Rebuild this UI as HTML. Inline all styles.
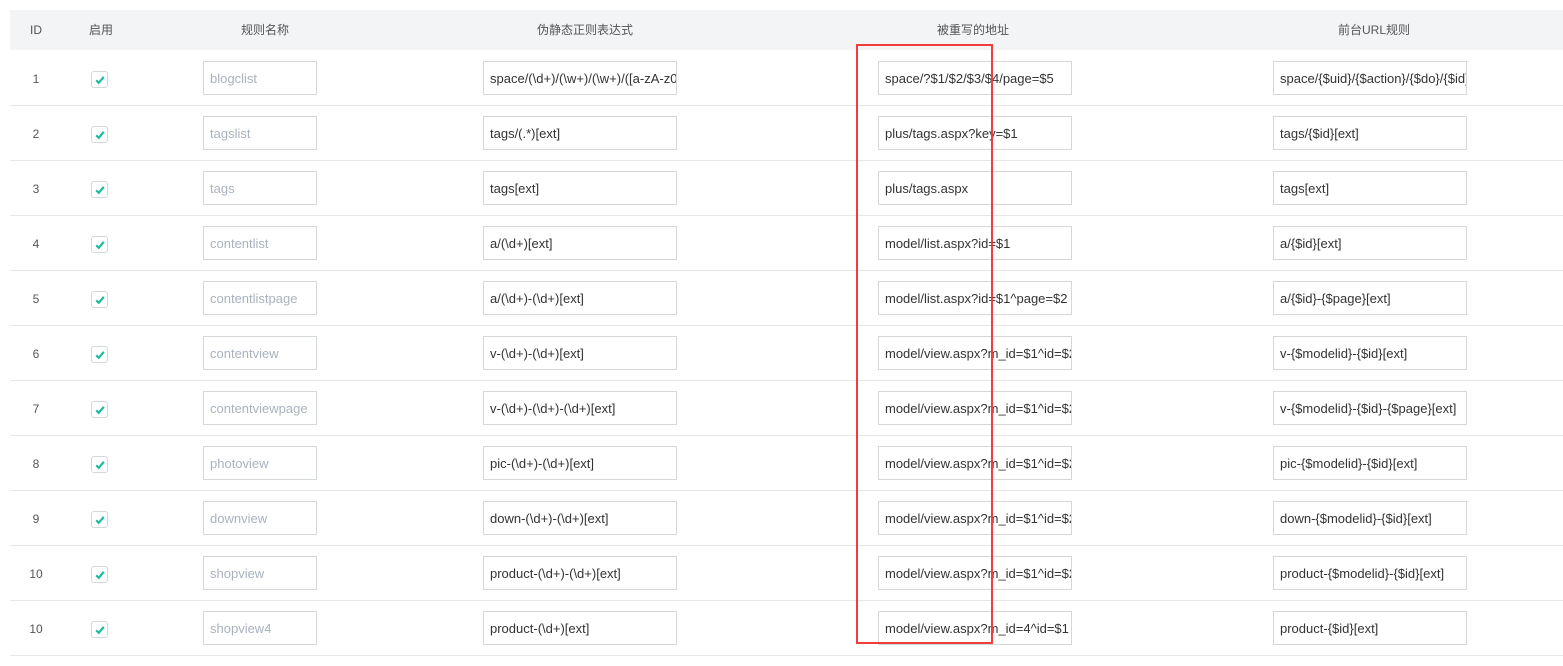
<!DOCTYPE html>
<html><head><meta charset="utf-8"><style>
*{margin:0;padding:0;box-sizing:border-box}
body{width:1563px;height:666px;background:#fff;position:relative;overflow:hidden;font-family:"Liberation Sans","Noto Sans CJK SC",sans-serif;font-size:13px;color:#333}
.hd{position:absolute;left:10px;top:10px;width:1553px;height:40px;background:#f3f4f6}
.h{position:absolute;top:23px;font-size:12px;line-height:14px;color:#555;transform:translateX(-50%);white-space:nowrap}
.row{position:absolute;left:10px;width:1553px;height:55px;border-bottom:1px solid #e6e6e6}
.id{position:absolute;left:26px;top:1px;width:0;line-height:54px;text-align:center;color:#555;font-size:12px}
.id span{position:absolute;transform:translateX(-50%)}
.cb{position:absolute;left:81px;top:20px;width:17px;height:17px;border:1px solid #d3d8db;border-radius:3px;background:#fff}
.cb svg{position:absolute;left:3px;top:3px}
.in{position:absolute;top:10px;height:34px;border:1px solid #d4d8db;padding-left:6px;line-height:33px;white-space:nowrap;overflow:hidden;background:#fff}
.n{left:193px;width:114px;color:#aab2bd}
.a{left:473px;width:194px}
.b{left:868px;width:194px}
.c{left:1263px;width:194px}
.red{position:absolute;left:856px;top:44px;width:137px;height:600px;border:2px solid #f23d3d}
</style></head><body>
<div class="hd"></div>
<div class="h" style="left:36px">ID</div>
<div class="h" style="left:101px">启用</div>
<div class="h" style="left:265px">规则名称</div>
<div class="h" style="left:585px">伪静态正则表达式</div>
<div class="h" style="left:973px">被重写的地址</div>
<div class="h" style="left:1374px">前台URL规则</div>

<div class="row" style="top:51px"><div class="id"><span>1</span></div><div class="cb"><svg width="10" height="10" viewBox="0 0 10 10"><path d="M1.2 5.3 L3.8 7.8 L8.8 1.8" stroke="#1bbc9b" stroke-width="2.2" fill="none"/></svg></div><div class="in n">blogclist</div><div class="in a">space/(\d+)/(\w+)/(\w+)/([a-zA-z0</div><div class="in b">space/?$1/$2/$3/$4/page=$5</div><div class="in c">space/{$uid}/{$action}/{$do}/{$id}</div></div>
<div class="row" style="top:106px"><div class="id"><span>2</span></div><div class="cb"><svg width="10" height="10" viewBox="0 0 10 10"><path d="M1.2 5.3 L3.8 7.8 L8.8 1.8" stroke="#1bbc9b" stroke-width="2.2" fill="none"/></svg></div><div class="in n">tagslist</div><div class="in a">tags/(.*)[ext]</div><div class="in b">plus/tags.aspx?key=$1</div><div class="in c">tags/{$id}[ext]</div></div>
<div class="row" style="top:161px"><div class="id"><span>3</span></div><div class="cb"><svg width="10" height="10" viewBox="0 0 10 10"><path d="M1.2 5.3 L3.8 7.8 L8.8 1.8" stroke="#1bbc9b" stroke-width="2.2" fill="none"/></svg></div><div class="in n">tags</div><div class="in a">tags[ext]</div><div class="in b">plus/tags.aspx</div><div class="in c">tags[ext]</div></div>
<div class="row" style="top:216px"><div class="id"><span>4</span></div><div class="cb"><svg width="10" height="10" viewBox="0 0 10 10"><path d="M1.2 5.3 L3.8 7.8 L8.8 1.8" stroke="#1bbc9b" stroke-width="2.2" fill="none"/></svg></div><div class="in n">contentlist</div><div class="in a">a/(\d+)[ext]</div><div class="in b">model/list.aspx?id=$1</div><div class="in c">a/{$id}[ext]</div></div>
<div class="row" style="top:271px"><div class="id"><span>5</span></div><div class="cb"><svg width="10" height="10" viewBox="0 0 10 10"><path d="M1.2 5.3 L3.8 7.8 L8.8 1.8" stroke="#1bbc9b" stroke-width="2.2" fill="none"/></svg></div><div class="in n">contentlistpage</div><div class="in a">a/(\d+)-(\d+)[ext]</div><div class="in b">model/list.aspx?id=$1^page=$2</div><div class="in c">a/{$id}-{$page}[ext]</div></div>
<div class="row" style="top:326px"><div class="id"><span>6</span></div><div class="cb"><svg width="10" height="10" viewBox="0 0 10 10"><path d="M1.2 5.3 L3.8 7.8 L8.8 1.8" stroke="#1bbc9b" stroke-width="2.2" fill="none"/></svg></div><div class="in n">contentview</div><div class="in a">v-(\d+)-(\d+)[ext]</div><div class="in b">model/view.aspx?m_id=$1^id=$2</div><div class="in c">v-{$modelid}-{$id}[ext]</div></div>
<div class="row" style="top:381px"><div class="id"><span>7</span></div><div class="cb"><svg width="10" height="10" viewBox="0 0 10 10"><path d="M1.2 5.3 L3.8 7.8 L8.8 1.8" stroke="#1bbc9b" stroke-width="2.2" fill="none"/></svg></div><div class="in n">contentviewpage</div><div class="in a">v-(\d+)-(\d+)-(\d+)[ext]</div><div class="in b">model/view.aspx?m_id=$1^id=$2</div><div class="in c">v-{$modelid}-{$id}-{$page}[ext]</div></div>
<div class="row" style="top:436px"><div class="id"><span>8</span></div><div class="cb"><svg width="10" height="10" viewBox="0 0 10 10"><path d="M1.2 5.3 L3.8 7.8 L8.8 1.8" stroke="#1bbc9b" stroke-width="2.2" fill="none"/></svg></div><div class="in n">photoview</div><div class="in a">pic-(\d+)-(\d+)[ext]</div><div class="in b">model/view.aspx?m_id=$1^id=$2</div><div class="in c">pic-{$modelid}-{$id}[ext]</div></div>
<div class="row" style="top:491px"><div class="id"><span>9</span></div><div class="cb"><svg width="10" height="10" viewBox="0 0 10 10"><path d="M1.2 5.3 L3.8 7.8 L8.8 1.8" stroke="#1bbc9b" stroke-width="2.2" fill="none"/></svg></div><div class="in n">downview</div><div class="in a">down-(\d+)-(\d+)[ext]</div><div class="in b">model/view.aspx?m_id=$1^id=$2</div><div class="in c">down-{$modelid}-{$id}[ext]</div></div>
<div class="row" style="top:546px"><div class="id"><span>10</span></div><div class="cb"><svg width="10" height="10" viewBox="0 0 10 10"><path d="M1.2 5.3 L3.8 7.8 L8.8 1.8" stroke="#1bbc9b" stroke-width="2.2" fill="none"/></svg></div><div class="in n">shopview</div><div class="in a">product-(\d+)-(\d+)[ext]</div><div class="in b">model/view.aspx?m_id=$1^id=$2</div><div class="in c">product-{$modelid}-{$id}[ext]</div></div>
<div class="row" style="top:601px"><div class="id"><span>10</span></div><div class="cb"><svg width="10" height="10" viewBox="0 0 10 10"><path d="M1.2 5.3 L3.8 7.8 L8.8 1.8" stroke="#1bbc9b" stroke-width="2.2" fill="none"/></svg></div><div class="in n">shopview4</div><div class="in a">product-(\d+)[ext]</div><div class="in b">model/view.aspx?m_id=4^id=$1</div><div class="in c">product-{$id}[ext]</div></div>

<div class="red"></div>
</body></html>
